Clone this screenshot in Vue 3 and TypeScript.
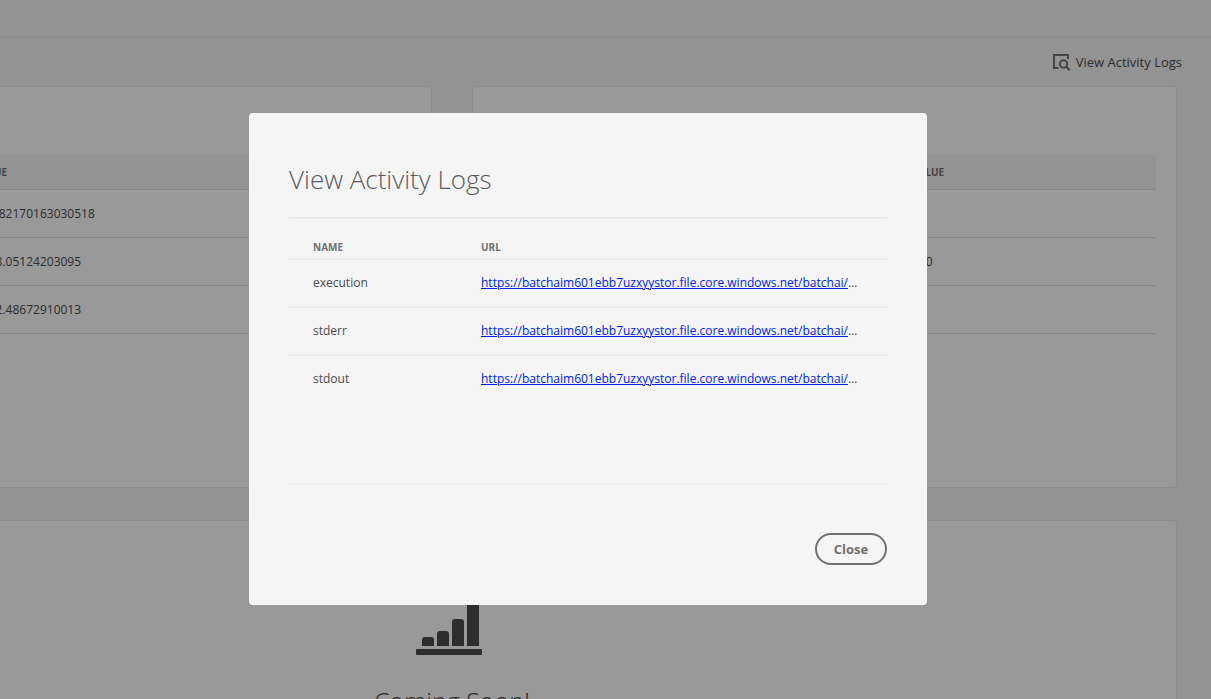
<script setup lang="ts">
import { ref } from 'vue'

interface LogEntry {
  name: string
  url: string
}

interface Metric {
  name: string
  value: string
}

const open = ref(true)

const base = 'https://batchaim601ebb7uzxyystor.file.core.windows.net/batchai/'
const logs: LogEntry[] = [
  { name: 'execution', url: base },
  { name: 'stderr', url: base },
  { name: 'stdout', url: base },
]

const metrics: Metric[] = [
  { name: '', value: '0.4382170163030518' },
  { name: '', value: '1348.05124203095' },
  { name: '', value: '1132.48672910013' },
]

const settings: Metric[] = [
  { name: '', value: '' },
  { name: '', value: '100' },
  { name: '', value: '' },
]
</script>

<template>
  <div class="app">
    <div class="page">
      <header class="topbar"></header>
      <div class="actions">
        <button class="action" type="button" @click="open = true">
          <svg width="18" height="18" viewBox="0 0 18 18" fill="none" stroke="currentColor" stroke-width="2" aria-hidden="true">
            <path d="M15 6V2H1v13H5.500" />
            <circle cx="10.500" cy="11" r="3.700" />
            <path d="M13 13.500L16.700 17.200" stroke-width="2.200" />
          </svg>
          <span>View Activity Logs</span>
        </button>
      </div>

      <main class="cards">
        <section class="card">
          <table class="data metrics">
            <thead>
              <tr><th class="key"></th><th>VALUE</th></tr>
            </thead>
            <tbody>
              <tr v-for="(row, i) in metrics" :key="i">
                <td>{{ row.name }}</td>
                <td>{{ row.value }}</td>
              </tr>
            </tbody>
          </table>
        </section>
        <section class="card">
          <table class="data settings">
            <thead>
              <tr><th class="key"></th><th>VALUE</th></tr>
            </thead>
            <tbody>
              <tr v-for="(row, i) in settings" :key="i">
                <td>{{ row.name }}</td>
                <td>{{ row.value }}</td>
              </tr>
            </tbody>
          </table>
        </section>
        <section class="card soon">
          <svg width="72" height="66" viewBox="0 0 72 66" fill="currentColor" aria-hidden="true">
            <path d="M6 57v-6a3 3 0 0 1 3-3h6a3 3 0 0 1 3 3v6z" />
            <path d="M21 57v-12a3 3 0 0 1 3-3h6a3 3 0 0 1 3 3v12z" />
            <path d="M36 57v-24a3 3 0 0 1 3-3h6a3 3 0 0 1 3 3v24z" />
            <path d="M51 57v-42a3 3 0 0 1 3-3h6a3 3 0 0 1 3 3v42z" />
            <rect x="0" y="60" width="66" height="6" rx="1" />
          </svg>
          <h2>Coming Soon!</h2>
        </section>
      </main>
    </div>

    <div v-if="open" class="overlay">
      <div class="dialog" role="dialog" aria-modal="true" aria-labelledby="dialog-title">
        <h1 id="dialog-title">View Activity Logs</h1>
        <div class="dialog-body">
          <table class="logs">
            <thead>
              <tr><th class="name">NAME</th><th>URL</th></tr>
            </thead>
            <tbody>
              <tr v-for="log in logs" :key="log.name">
                <td>{{ log.name }}</td>
                <td><a :href="log.url">{{ log.url }}</a>…</td>
              </tr>
            </tbody>
          </table>
        </div>
        <footer>
          <button class="close" type="button" @click="open = false">Close</button>
        </footer>
      </div>
    </div>
  </div>
</template>

<style>
body {
  background: #f5f5f5;
}
</style>

<style scoped>
.app {
  height: 100vh;
  overflow: hidden;
  background: #f5f5f5;
  color: #4b4b4b;
  font-family: "Open Sans", "Noto Sans", sans-serif;
}

/* The page is scrolled sideways, so its left part lies outside the window. */
.page {
  margin-left: -273px;
}

.topbar {
  height: 36px;
  border-bottom: 2px solid #ebebeb;
}

.actions {
  display: flex;
  justify-content: flex-end;
  align-items: center;
  height: 48px;
  padding-right: 29px;
}

.action {
  display: flex;
  align-items: center;
  gap: 5px;
  padding: 0;
  border: 0;
  background: none;
  color: #4b4b4b;
  font: 400 13px/20px "Open Sans", "Noto Sans", sans-serif;
  cursor: pointer;
}

.action svg {
  color: #747474;
}

.cards {
  display: grid;
  grid-template-columns: 1fr 1fr;
  gap: 32px 40px;
  padding-right: 34px;
}

.card {
  box-sizing: border-box;
  min-height: 402px;
  padding: 68px 20px 20px;
  border: 1px solid #eaeaea;
  border-radius: 4px;
  background: #fff;
}

.data,
.logs {
  width: 100%;
  border-collapse: separate;
  border-spacing: 0;
  table-layout: fixed;
}

.data th,
.data td {
  height: 47px;
  padding: 0 24px;
  border-bottom: 1px solid #e0e0e0;
  text-align: left;
  font-size: 12px;
  font-weight: 500;
  line-height: 16px;
  white-space: nowrap;
}

.data th {
  height: 34px;
  background: #f5f5f5;
  color: #707070;
  font-size: 10px;
  font-weight: 700;
}

.metrics .key {
  width: 155px;
}

.settings .key {
  width: 347px;
}

.soon {
  grid-column: 1 / -1;
  display: flex;
  flex-direction: column;
  align-items: center;
}

.soon h2 {
  margin: 28px 0 0;
  font-size: 25px;
  font-weight: 300;
  line-height: 36px;
}

.overlay {
  position: fixed;
  inset: 0;
  box-sizing: border-box;
  display: grid;
  place-items: center;
  padding: 19px 35px 0 0;
  background: rgba(0, 0, 0, 0.4);
}

.dialog {
  box-sizing: border-box;
  width: 678px;
  max-width: 90vw;
  padding: 40px;
  border-radius: 4px;
  background: #f5f5f5;
}

.dialog h1 {
  margin: 0;
  padding-bottom: 12px;
  border-bottom: 2px solid #eaeaea;
  color: #5c5c5c;
  font-size: 26px;
  font-weight: 300;
  line-height: 52px;
}

.dialog-body {
  min-height: 264px;
  border-bottom: 2px solid #ededed;
}

.logs th,
.logs td {
  padding: 15px 24px;
  border-bottom: 2px solid #eaeaea;
  text-align: left;
  font-size: 12px;
  font-weight: 500;
  line-height: 16px;
  white-space: nowrap;
}

.logs th {
  padding: 20px 24px 3px;
  color: #707070;
  font-size: 10px;
  font-weight: 700;
}

.logs tbody tr:last-child td {
  border-bottom: 0;
}

.logs td:last-child {
  padding-right: 0;
}

.logs .name {
  width: 120px;
}

.logs a {
  color: #0022ee;
}

.dialog footer {
  display: flex;
  justify-content: flex-end;
  padding-top: 48px;
}

.close {
  height: 32px;
  min-width: 72px;
  padding: 0 16px;
  border: 2px solid #707070;
  border-radius: 16px;
  background: none;
  color: #707070;
  font: 700 13px/20px "Open Sans", "Noto Sans", sans-serif;
  cursor: pointer;
}
</style>
